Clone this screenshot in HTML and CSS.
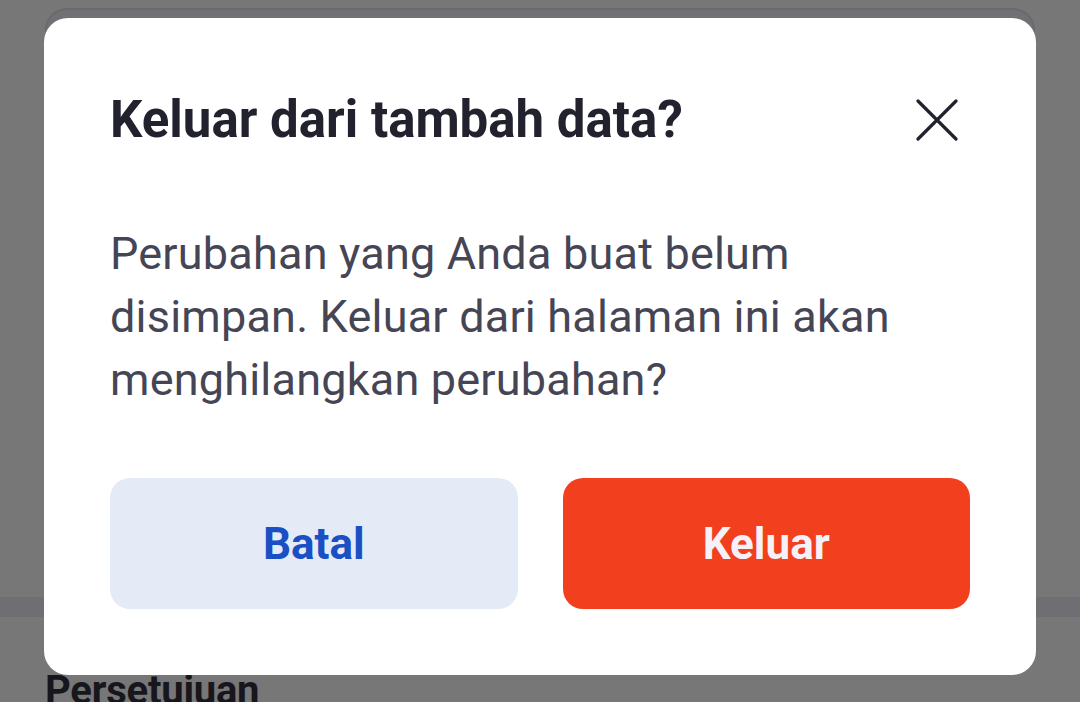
FILE: index.html
```html
<!DOCTYPE html>
<html lang="id">
<head>
<meta charset="utf-8">
<title>Tambah data</title>
<link rel="stylesheet" href="styles.css">
</head>
<body>
<div class="page">
  <div class="form-card"></div>
  <div class="section-band"></div>
  <h2 class="section-title">Persetujuan</h2>
</div>

<div class="dialog" role="dialog" aria-labelledby="dlg-title">
  <div class="dialog-head">
    <h1 id="dlg-title" class="dialog-title">Keluar dari tambah data?</h1>
    <button class="close-btn" aria-label="Tutup">
      <svg width="42" height="42" viewBox="0 0 42 42">
        <path d="M2 2 L40 40 M40 2 L2 40" stroke="#22222f" stroke-width="3.2" stroke-linecap="round" fill="none"/>
      </svg>
    </button>
  </div>
  <p class="dialog-text">Perubahan yang Anda buat belum disimpan. Keluar dari halaman ini akan menghilangkan perubahan?</p>
  <div class="dialog-actions">
    <button class="btn btn-cancel">Batal</button>
    <button class="btn btn-exit">Keluar</button>
  </div>
</div>
</body>
</html>
```

FILE: styles.css
```css
html, body {
  margin: 0;
  padding: 0;
  height: 100%;
  overflow: hidden;
}

body {
  background: #777777;
  font-family: Roboto, "Noto Sans", sans-serif;
}

/* dimmed page underneath the dialog */
.page {
  display: flex;
  flex-direction: column;
  padding-top: 8px;
}

.form-card {
  margin: 0 45px;
  height: 560px;
  border: 2px solid #69696e;
  border-bottom: none;
  border-radius: 22px 22px 0 0;
  background: #717175;
}

.section-band {
  margin-top: 27px;
  height: 20px;
  background: #6e6e73;
}

.section-title {
  margin: 51px 0 0 45px;
  font-size: 40px;
  font-weight: 700;
  color: #16161c;
  line-height: 46px;
  letter-spacing: -0.2px;
}

/* dialog */
.dialog {
  position: fixed;
  left: 44px;
  top: 18px;
  width: 992px;
  height: 657px;
  box-sizing: border-box;
  background: #ffffff;
  border-radius: 24px;
  padding: 76px 66px 0 66px;
  display: flex;
  flex-direction: column;
}

.dialog-head {
  display: flex;
  align-items: center;
  justify-content: space-between;
}

.dialog-title {
  margin: 0;
  font-size: 51px;
  line-height: 52px;
  font-weight: 700;
  color: #22222f;
  letter-spacing: 0;
}

.close-btn {
  border: none;
  background: none;
  padding: 0;
  margin-right: 12px;
  width: 42px;
  height: 42px;
  display: flex;
}

.dialog-text {
  margin: 76px 0 0 0;
  font-size: 45px;
  line-height: 63px;
  color: #454555;
  letter-spacing: 0.2px;
  max-width: 820px;
}

.dialog-actions {
  margin-top: 67px;
  display: flex;
  gap: 45px;
}

.btn {
  flex: 1;
  height: 131px;
  border: none;
  border-radius: 20px;
  font-family: Roboto, "Noto Sans", sans-serif;
  font-size: 44px;
  font-weight: 700;
}

.btn-cancel {
  background: #e4eaf6;
  color: #1b4fc4;
}

.btn-exit {
  background: #f2401f;
  color: #f6f1f8;
}
```
